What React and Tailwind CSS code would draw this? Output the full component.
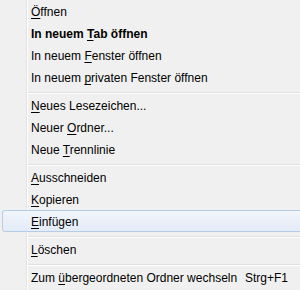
import React from "react";

const items = [
  { pre: "", key: "Ö", post: "ffnen" },
  { pre: "In neuem ", key: "T", post: "ab öffnen", bold: true },
  { pre: "In neuem ", key: "F", post: "enster öffnen" },
  { pre: "In neuem ", key: "p", post: "rivaten Fenster öffnen" },
  { sep: true },
  { pre: "", key: "N", post: "eues Lesezeichen..." },
  { pre: "Neuer ", key: "O", post: "rdner..." },
  { pre: "Neue ", key: "T", post: "rennlinie" },
  { sep: true },
  { pre: "", key: "A", post: "usschneiden" },
  { pre: "", key: "K", post: "opieren" },
  { pre: "", key: "E", post: "infügen", active: true },
  { sep: true },
  { pre: "", key: "L", post: "öschen" },
  { sep: true },
  { pre: "Zum ", key: "ü", post: "bergeordneten Ordner wechseln", shortcut: "Strg+F1" },
];

const MenuItem = ({ item }) => {
  if (item.sep) {
    return (
      <div className="h-[6px] pt-[4px] pl-[28px]">
        <div className="h-px bg-[#e0e0e0]" />
        <div className="h-px bg-white" />
      </div>
    );
  }

  return (
    <div
      className={`flex h-[22px] items-center pt-[2px] ${
        item.active
          ? "ml-[2px] pl-[28px] rounded-[3px] border border-[#b6cbe6] bg-gradient-to-b from-[#f2f6fc] to-[#e3ebf7]"
          : "pl-[31px]"
      } ${item.bold ? "font-bold" : ""}`}
    >
      <span className="w-[214px] shrink-0 whitespace-nowrap">
        {item.pre}
        <u className="underline-offset-2">{item.key}</u>
        {item.post}
      </span>
      {item.shortcut && <span className="whitespace-nowrap">{item.shortcut}</span>}
    </div>
  );
};

const App = () => {
  return (
    <div className="w-[300px] h-[290px] overflow-hidden bg-[#f0f0f0]">
      <div
        className="w-[306px] h-[290px] text-[12px] text-[#000] bg-[linear-gradient(to_right,#f0f0f0_26px,#e2e3e3_26px,#e2e3e3_27px,#ffffff_27px,#ffffff_28px,#f0f0f0_28px)]"
        style={{ fontFamily: '"Liberation Sans", Arial, sans-serif' }}
      >
        {items.map((item, index) => (
          <MenuItem key={index} item={item} />
        ))}
      </div>
    </div>
  );
};

export default App;
